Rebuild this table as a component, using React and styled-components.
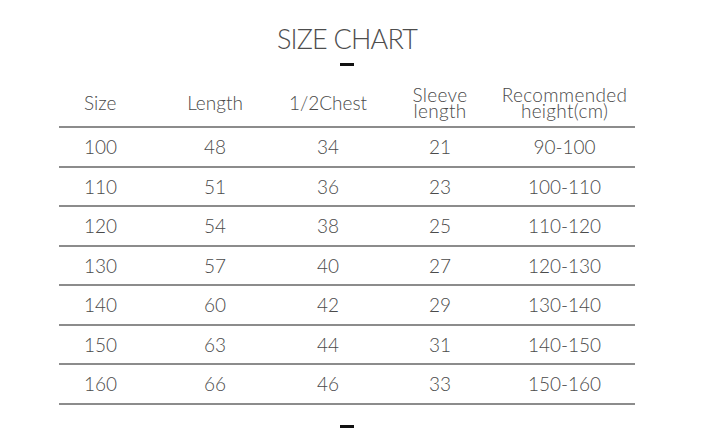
import React from 'react';
import styled, { createGlobalStyle } from 'styled-components';

const GlobalStyle = createGlobalStyle`
  body {
    margin: 0;
    background: #fff;
    font-family: "Lato", "Open Sans", sans-serif;
    font-weight: 300;
    color: #4a4a4a;
  }
`;

const Page = styled.div`
  width: 720px;
  height: 428px;
  overflow: hidden;
  display: flex;
  flex-direction: column;
  align-items: center;
  padding: 22px 26px 0 0;
  box-sizing: border-box;
`;

const Title = styled.h1`
  margin: 0;
  font-size: 27px;
  font-weight: 300;
  line-height: 34px;
  letter-spacing: -0.8px;
  color: #4d4d4d;
`;

const Dash = styled.div`
  width: 14px;
  height: 3px;
  background: #111;
  margin-top: ${(p) => p.top || 0}px;
`;

const Table = styled.div`
  width: 576px;
  margin-top: 12px;
  border-bottom: 2px solid #8c8c8c;
`;

const Row = styled.div`
  display: grid;
  grid-template-columns: 101px 110px 116px 108px 141px;
  align-items: center;
  height: ${(p) => (p.head ? 48 : 37.5)}px;
  border-top: ${(p) => (p.head ? 'none' : '2px solid #8c8c8c')};
`;

const Cell = styled.div`
  text-align: ${(p) => (p.first ? 'left' : 'center')};
  padding-left: ${(p) => (p.first ? 25 : 0)}px;
  font-size: 19px;
  font-weight: 300;
  color: #4a4a4a;
`;

const HeadCell = styled(Cell)`
  line-height: ${(p) => (p.small ? '16px' : '22px')};
  letter-spacing: ${(p) => (p.small ? '0.3px' : '0')};
  padding-top: 2px;
`;

const rows = [
  ['100', '48', '34', '21', '90-100'],
  ['110', '51', '36', '23', '100-110'],
  ['120', '54', '38', '25', '110-120'],
  ['130', '57', '40', '27', '120-130'],
  ['140', '60', '42', '29', '130-140'],
  ['150', '63', '44', '31', '140-150'],
  ['160', '66', '46', '33', '150-160'],
];

export default function App() {
  return (
    <>
      <GlobalStyle />
      <Page>
        <Title>SIZE CHART</Title>
        <Dash top={7} />
        <Table>
          <Row head>
            <HeadCell first>Size</HeadCell>
            <HeadCell>Length</HeadCell>
            <HeadCell>1/2Chest</HeadCell>
            <HeadCell small>Sleeve<br />length</HeadCell>
            <HeadCell small>Recommended<br />height(cm)</HeadCell>
          </Row>
          {rows.map((r) => (
            <Row key={r[0]}>
              {r.map((v, i) => (
                <Cell key={i} first={i === 0}>{v}</Cell>
              ))}
            </Row>
          ))}
        </Table>
        <Dash top={20} />
      </Page>
    </>
  );
}
